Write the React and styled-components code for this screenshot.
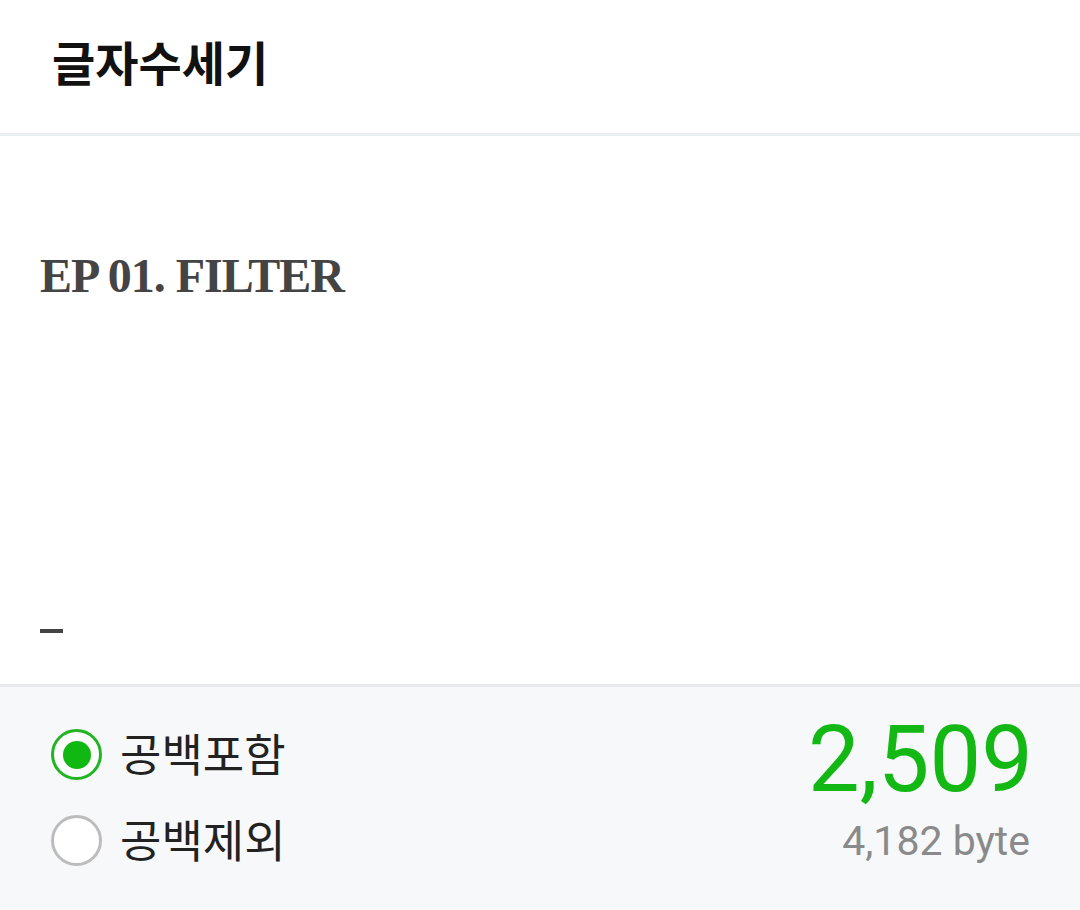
import React, { useState } from "react";
import styled, { createGlobalStyle } from "styled-components";

const GlobalStyle = createGlobalStyle`
  html, body {
    margin: 0;
    padding: 0;
    background: #ffffff;
  }
  body {
    font-family: "Noto Sans CJK KR", "Noto Sans", sans-serif;
  }
  * {
    box-sizing: border-box;
  }
`;

const Screen = styled.div`
  display: flex;
  flex-direction: column;
  width: 1080px;
  height: 910px;
  overflow: hidden;
`;

const Header = styled.header`
  display: flex;
  align-items: center;
  flex-shrink: 0;
  height: 136px;
  padding-left: 52px;
  border-bottom: 3px solid #e9eeee;
`;

const Title = styled.h1`
  margin: 0;
  font-size: 47px;
  font-weight: 700;
  color: #111;
  line-height: 1;
  padding-bottom: 12px;
`;

const Editor = styled.main`
  flex: 1;
  display: flex;
  flex-direction: column;
  justify-content: space-between;
  padding: 116px 40px 51px;
  background: #fff;
`;

const DocTitle = styled.h2`
  margin: 0;
  font-family: "Liberation Serif", "Times New Roman", serif;
  font-weight: 700;
  font-size: 48px;
  letter-spacing: -1px;
  line-height: 1;
  color: #444;
`;

const Caret = styled.span`
  display: block;
  width: 23px;
  height: 4px;
  background: #444;
`;

const Footer = styled.footer`
  display: flex;
  justify-content: space-between;
  align-items: flex-start;
  flex-shrink: 0;
  height: 226px;
  padding: 26px 50px 0 51px;
  border-top: 3px solid #e6eaed;
  background: #f7f8fa;
`;

const Options = styled.div`
  display: flex;
  flex-direction: column;
  gap: 35px;
  margin-top: 16px;
`;

const Option = styled.label`
  display: flex;
  align-items: center;
  gap: 18px;
  cursor: pointer;
  height: 51px;
`;

const Radio = styled.span`
  position: relative;
  width: 51px;
  height: 51px;
  border-radius: 50%;
  border: 3px solid ${(p) => (p.checked ? "#22b422" : "#bcbcbc")};
  background: #fff;
  flex-shrink: 0;

  &::after {
    content: "";
    position: absolute;
    left: 50%;
    top: 50%;
    width: 28px;
    height: 28px;
    margin: -14px 0 0 -14px;
    border-radius: 50%;
    background: #11b811;
    display: ${(p) => (p.checked ? "block" : "none")};
  }
`;

const OptionText = styled.span`
  font-size: 45px;
  color: #222;
  line-height: 1;
  padding-bottom: 4px;
`;

const Counter = styled.div`
  display: flex;
  flex-direction: column;
  align-items: flex-end;
`;

const Count = styled.div`
  font-family: Roboto, "Noto Sans", sans-serif;
  font-size: 92px;
  line-height: 1;
  color: #14b814;
  margin-right: -3px;
  margin-top: 1px;
`;

const Bytes = styled.div`
  font-family: Roboto, "Noto Sans", sans-serif;
  font-size: 41px;
  line-height: 1;
  color: #8a8a8a;
  margin-top: 15px;
`;

export default function App() {
  const [withSpace, setWithSpace] = useState(true);
  const options = [
    { key: true, label: "공백포함" },
    { key: false, label: "공백제외" },
  ];

  return (
    <Screen>
      <GlobalStyle />
      <Header>
        <Title>글자수세기</Title>
      </Header>
      <Editor>
        <DocTitle>EP 01. FILTER</DocTitle>
        <Caret />
      </Editor>
      <Footer>
        <Options>
          {options.map((o) => (
            <Option key={o.label} onClick={() => setWithSpace(o.key)}>
              <Radio checked={withSpace === o.key} />
              <OptionText>{o.label}</OptionText>
            </Option>
          ))}
        </Options>
        <Counter>
          <Count>{withSpace ? "2,509" : "1,954"}</Count>
          <Bytes>4,182 byte</Bytes>
        </Counter>
      </Footer>
    </Screen>
  );
}
